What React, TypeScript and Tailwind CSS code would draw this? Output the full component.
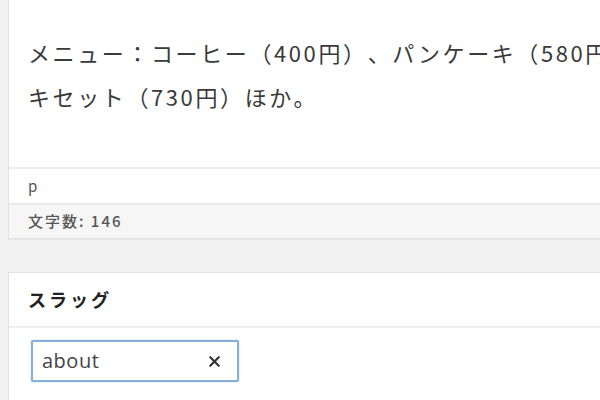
import { X } from 'lucide-react';

const FONT = '"Noto Sans CJK JP", "Noto Sans", "Liberation Sans", sans-serif';

export default function App() {
  return (
    <main
      className="w-[600px] h-[400px] overflow-hidden bg-[#f1f1f1] pl-[8px]"
      style={{ fontFamily: FONT }}
    >
      {/* editor */}
      <div className="w-[620px] border-l border-b border-[#e2e2e2] bg-white shadow-[0_1px_1px_rgba(0,0,0,0.04)]">
        <div className="h-[167px] pl-[19px] pt-[30px] text-[22px] leading-[44px] tracking-[2.6px] text-[#3a3a3a] whitespace-nowrap [text-spacing-trim:space-all]">
          <p>メニュー：コーヒー（400円）、パンケーキ（580円）、パンケー</p>
          <p>キセット（730円）ほか。</p>
        </div>
        <div className="flex h-[36px] items-center border-t-2 border-[#ececec] pl-[19px] text-[15px] text-[#555]">
          p
        </div>
        <div className="flex h-[35px] items-center border-t-2 border-[#e8e8e8] bg-[#f6f6f6] pl-[19px] text-[15px] font-medium tracking-[2px] text-[#555]">
          文字数: 146
        </div>
      </div>

      {/* slug panel */}
      <div className="mt-[33px] h-[200px] w-[620px] border-l border-t border-[#e2e2e2] bg-white">
        <div className="flex h-[53px] items-center pl-[19px] text-[18px] font-bold tracking-[3px] text-[#222]">
          スラッグ
        </div>
        <div className="border-t-2 border-[#efefef] pl-[22px] pt-[12px]">
          <div className="flex h-[42px] w-[208px] items-center justify-between rounded-[2px] border-2 border-[#86aedb] bg-white pl-[9px] pr-[14px] shadow-[0_0_2px_rgba(30,140,190,0.35)]">
            <span
              className="text-[20px] tracking-[0.5px] text-[#444]"
              style={{ fontFamily: '"Open Sans", "Noto Sans", sans-serif' }}
            >
              about
            </span>
            <X size={17} strokeWidth={3} className="text-[#333]" />
          </div>
        </div>
      </div>
    </main>
  );
}
